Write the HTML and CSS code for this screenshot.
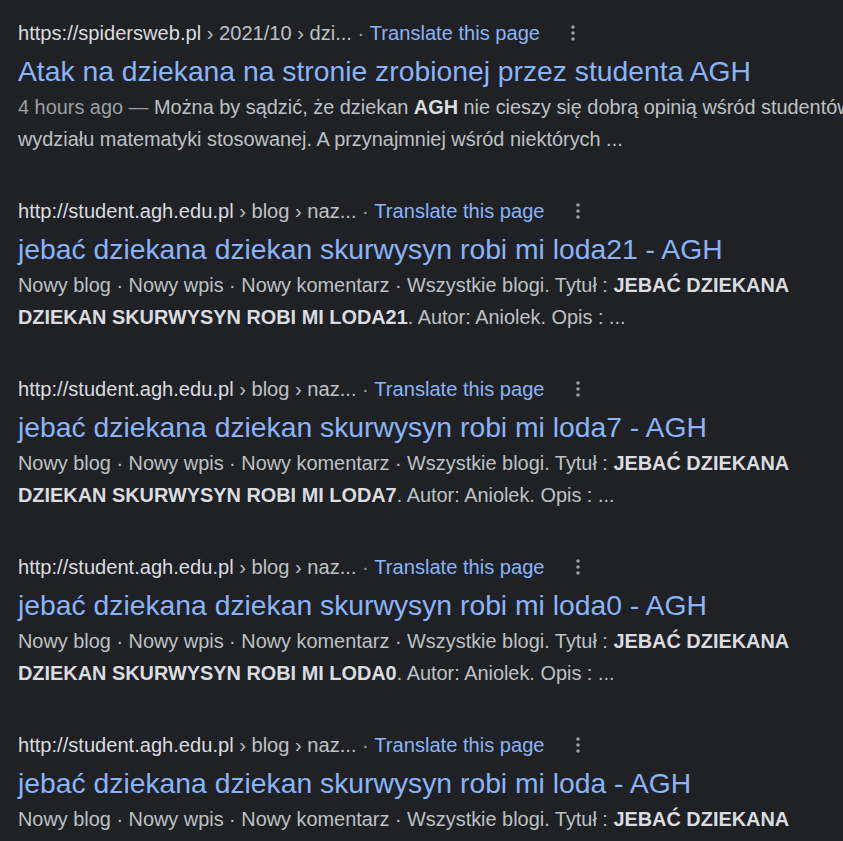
FILE: index.html
```html
<!DOCTYPE html>
<html lang="pl">
<head>
<meta charset="utf-8">
<title>Wyniki</title>
<link rel="stylesheet" href="styles.css">
</head>
<body>
<main class="results">
  <div class="result">
    <div class="cite"><span class="host">https://spidersweb.pl</span><span class="path"> › 2021/10 › dzi...</span><span class="sep"> · </span><a class="translate">Translate this page</a><svg class="kebab" width="8" height="18" viewBox="0 0 8 18"><circle cx="4" cy="3" r="1.8"/><circle cx="4" cy="9" r="1.8"/><circle cx="4" cy="15" r="1.8"/></svg></div>
    <h3 class="title">Atak na dziekana na stronie zrobionej przez studenta AGH</h3>
    <div class="snippet"><span class="date">4 hours ago — </span>Można by sądzić, że dziekan <b>AGH</b> nie cieszy się dobrą opinią wśród studentów<br>wydziału matematyki stosowanej. A przynajmniej wśród niektórych ...</div>
  </div>

  <div class="result">
    <div class="cite"><span class="host">http://student.agh.edu.pl</span><span class="path"> › blog › naz...</span><span class="sep"> · </span><a class="translate">Translate this page</a><svg class="kebab" width="8" height="18" viewBox="0 0 8 18"><circle cx="4" cy="3" r="1.8"/><circle cx="4" cy="9" r="1.8"/><circle cx="4" cy="15" r="1.8"/></svg></div>
    <h3 class="title">jebać dziekana dziekan skurwysyn robi mi loda21 - AGH</h3>
    <div class="snippet">Nowy blog · Nowy wpis · Nowy komentarz · Wszystkie blogi. Tytuł : <b>JEBAĆ DZIEKANA</b><br><b>DZIEKAN SKURWYSYN ROBI MI LODA21</b>. Autor: Aniolek. Opis : ...</div>
  </div>

  <div class="result">
    <div class="cite"><span class="host">http://student.agh.edu.pl</span><span class="path"> › blog › naz...</span><span class="sep"> · </span><a class="translate">Translate this page</a><svg class="kebab" width="8" height="18" viewBox="0 0 8 18"><circle cx="4" cy="3" r="1.8"/><circle cx="4" cy="9" r="1.8"/><circle cx="4" cy="15" r="1.8"/></svg></div>
    <h3 class="title">jebać dziekana dziekan skurwysyn robi mi loda7 - AGH</h3>
    <div class="snippet">Nowy blog · Nowy wpis · Nowy komentarz · Wszystkie blogi. Tytuł : <b>JEBAĆ DZIEKANA</b><br><b>DZIEKAN SKURWYSYN ROBI MI LODA7</b>. Autor: Aniolek. Opis : ...</div>
  </div>

  <div class="result">
    <div class="cite"><span class="host">http://student.agh.edu.pl</span><span class="path"> › blog › naz...</span><span class="sep"> · </span><a class="translate">Translate this page</a><svg class="kebab" width="8" height="18" viewBox="0 0 8 18"><circle cx="4" cy="3" r="1.8"/><circle cx="4" cy="9" r="1.8"/><circle cx="4" cy="15" r="1.8"/></svg></div>
    <h3 class="title">jebać dziekana dziekan skurwysyn robi mi loda0 - AGH</h3>
    <div class="snippet">Nowy blog · Nowy wpis · Nowy komentarz · Wszystkie blogi. Tytuł : <b>JEBAĆ DZIEKANA</b><br><b>DZIEKAN SKURWYSYN ROBI MI LODA0</b>. Autor: Aniolek. Opis : ...</div>
  </div>

  <div class="result">
    <div class="cite"><span class="host">http://student.agh.edu.pl</span><span class="path"> › blog › naz...</span><span class="sep"> · </span><a class="translate">Translate this page</a><svg class="kebab" width="8" height="18" viewBox="0 0 8 18"><circle cx="4" cy="3" r="1.8"/><circle cx="4" cy="9" r="1.8"/><circle cx="4" cy="15" r="1.8"/></svg></div>
    <h3 class="title">jebać dziekana dziekan skurwysyn robi mi loda - AGH</h3>
    <div class="snippet">Nowy blog · Nowy wpis · Nowy komentarz · Wszystkie blogi. Tytuł : <b>JEBAĆ DZIEKANA</b><br><b>DZIEKAN SKURWYSYN ROBI MI LODA</b>. Autor: Aniolek. Opis : ...</div>
  </div>
</main>
</body>
</html>
```

FILE: styles.css
```css
html, body {
  margin: 0;
  padding: 0;
  background: #202124;
  overflow: hidden;
}

body {
  font-family: "Liberation Sans", Arial, sans-serif;
  color: #bdc1c6;
}

.results {
  padding: 18px 0 0 18px;
  display: flex;
  flex-direction: column;
  gap: 41px;
}

.result {
  display: flex;
  flex-direction: column;
}

.cite {
  font-size: 20.1px;
  line-height: 30px;
  height: 30px;
  white-space: nowrap;
  display: flex;
  align-items: center;
}

.host {
  color: #dadce0;
}

.path {
  color: #bdc1c6;
  white-space: pre;
}

.sep {
  color: #9aa0a6;
  white-space: pre;
}

.translate {
  color: #8ab4f8;
  text-decoration: none;
}

.kebab {
  margin-left: 29px;
  fill: #9aa0a6;
  flex: none;
}

.title {
  margin: 5px 0 0 0;
  font-size: 28.3px;
  font-weight: normal;
  line-height: 36px;
  color: #8ab4f8;
  white-space: nowrap;
}

.snippet {
  margin-top: 2px;
  font-size: 19.9px;
  line-height: 32px;
  white-space: nowrap;
  color: #bdc1c6;
}

.snippet b {
  color: #dadce0;
  font-weight: bold;
}

.date {
  color: #9aa0a6;
}
```
